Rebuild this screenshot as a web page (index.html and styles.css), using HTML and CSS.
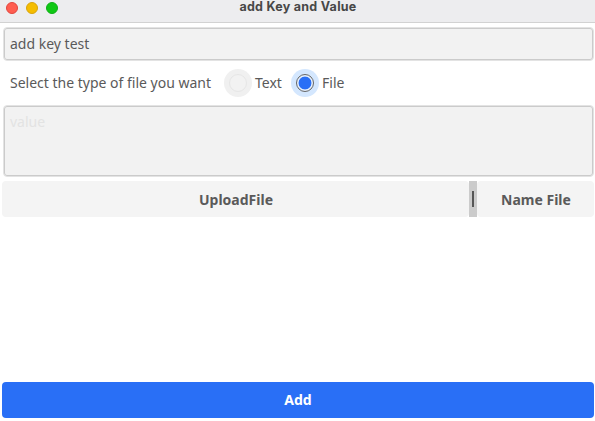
FILE: index.html
```html
<!DOCTYPE html>
<html lang="en">
<head>
<meta charset="utf-8">
<title>add Key and Value</title>
<link rel="stylesheet" href="styles.css">
</head>
<body>
<div class="window">
  <header class="titlebar">
    <div class="lights"><i class="light close"></i><i class="light minimize"></i><i class="light expand"></i></div>
    <h1 class="title">add Key and Value</h1>
  </header>
  <main class="content">
    <div class="field key">add key test</div>
    <div class="types">
      <span class="prompt">Select the type of file you want</span>
      <span class="radio off"><i class="dot"></i></span><span class="label">Text</span>
      <span class="radio on"><i class="dot"></i></span><span class="label">File</span>
    </div>
    <div class="field value">value</div>
    <div class="split">
      <div class="button upload">UploadFile</div>
      <div class="divider"><i class="grip"></i></div>
      <div class="button name">Name File</div>
    </div>
    <div class="button add">Add</div>
  </main>
</div>
</body>
</html>
```
FILE: styles.css
```css
* { box-sizing: border-box; }
body {
  margin: 0;
  background: #fff;
  color: #5a5a5a;
  font: 14px/20px "Noto Sans", sans-serif;
}
.window { display: flex; flex-direction: column; height: 421px; overflow: hidden; }
.titlebar {
  display: grid;
  grid-template-columns: 1fr auto 1fr;
  height: 23px;
  background: #ededef;
  border-bottom: 1px solid #d2d2d2;
}
.lights { display: flex; gap: 8px; padding: 2px 0 0 6px; }
.light { width: 12px; height: 12px; border-radius: 50%; border: 1px solid; }
.close { background: #ff5d50; border-color: #e2463e; }
.minimize { background: #f5bd00; border-color: #d9a40b; }
.expand { background: #10c814; border-color: #0eaf17; }
.title {
  margin: 0;
  padding-left: 1px;
  font: 700 12.5px/14px Inter, sans-serif;
  letter-spacing: 0.27px;
  color: #474747;
}
.content { display: flex; flex: 1; flex-direction: column; padding: 4px 1px 3px 2px; }
.field {
  margin: 0 0 0 1px;
  border: 1px solid #e3e3e3;
  border-radius: 4px;
  background: #f2f2f2;
  box-shadow: inset 0 0 0 1px #cbcbcb;
  padding-left: 6px;
}
.key { height: 34px; padding-top: 6px; }
.types { display: flex; align-items: center; height: 44px; padding-left: 8px; }
.prompt { width: 214px; white-space: nowrap; }
.radio {
  display: grid;
  place-items: center;
  width: 28px;
  height: 28px;
  border-radius: 50%;
  margin-right: 3px;
}
.off { background: #f0f0f0; }
.off .dot { border: 1px solid #e6e6e6; background: #f2f2f2; }
.on { background: #d4e7fe; }
.dot { width: 18px; height: 18px; border-radius: 50%; }
.on .dot { border: 1px solid #666; background: radial-gradient(circle, #296ff6 6px, #e4effd 6.8px); }
.label { width: 36px; }
.value { height: 72px; padding-top: 6px; color: #e3e3e3; }
.split { display: flex; height: 36px; margin-top: 4px; }
.button {
  display: flex;
  align-items: center;
  justify-content: center;
  height: 36px;
  border-radius: 4px;
  background: #f4f4f4;
  font-weight: 700;
}
.upload { width: 467px; padding: 2px 0 0 1px; }
.divider { display: grid; place-items: center; width: 8px; background: #cbcbcb; }
.grip { width: 2px; height: 16px; background: #565656; }
.name { flex: 1; padding: 2px 0 0 1px; }
.add { margin-top: auto; background: #296ff6; color: #fff; }
```
